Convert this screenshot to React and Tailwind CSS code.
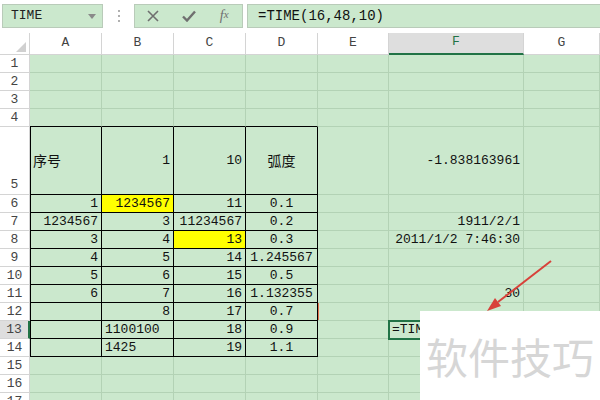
import React from "react";

// cell values by row: [text, align, highlight]
const data = {
  5: { A: ["序号", "l"], B: ["1", "r"], C: ["10", "r"], D: ["弧度", "c"], F: ["-1.838163961", "r"] },
  6: { A: ["1", "r"], B: ["1234567", "r", true], C: ["11", "r"], D: ["0.1", "c"] },
  7: { A: ["1234567", "r"], B: ["3", "r"], C: ["11234567", "r"], D: ["0.2", "c"], F: ["1911/2/1", "r"] },
  8: { A: ["3", "r"], B: ["4", "r"], C: ["13", "r", true], D: ["0.3", "c"], F: ["2011/1/2 7:46:30", "r"] },
  9: { A: ["4", "r"], B: ["5", "r"], C: ["14", "r"], D: ["1.245567", "c"] },
  10: { A: ["5", "r"], B: ["6", "r"], C: ["15", "r"], D: ["0.5", "c"] },
  11: { A: ["6", "r"], B: ["7", "r"], C: ["16", "r"], D: ["1.132355", "c"], F: ["30", "r"] },
  12: { B: ["8", "r"], C: ["17", "r"], D: ["0.7", "c"] },
  13: { B: ["1100100", "l"], C: ["18", "r"], D: ["0.9", "c"] },
  14: { B: ["1425", "l"], C: ["19", "r"], D: ["1.1", "c"] },
};

const cols = ["A", "B", "C", "D", "E", "F", "G"];
const rows = Array.from({ length: 17 }, (_, i) => i + 1);

const alignClass = {
  l: "justify-start",
  r: "justify-end",
  c: "justify-center",
};

const Cell = ({ r, col, ci }) => {
  const value = data[r]?.[col];
  const inTable = r >= 5 && r <= 14 && ci <= 3;
  const rightB = inTable ? "border-r-black" : "border-r-[#b3d2b5]";
  const bottomB = inTable || (r === 4 && ci <= 3) ? "border-b-black" : "border-b-[#b3d2b5]";
  const bg = value?.[2] ? "bg-[#ffff00]" : "bg-[#cbe8cd]";
  const leftEdge = inTable && ci === 0 ? "shadow-[inset_1px_0_0_#000]" : "";
  const redMark = r === 12 && col === "E" ? "shadow-[inset_1px_0_0_#e5734e]" : "";

  if (r === 13 && col === "F") {
    // cell being edited, its right part lies under the watermark
    return (
      <div className="relative bg-[#cbe8cd] border-r border-b border-r-[#b3d2b5] border-b-[#b3d2b5]">
        <div className="absolute -left-[1px] -top-[1px] w-[60px] h-[20px] border-2 border-[#217346] bg-[#cbe8cd] flex items-center pl-[2px] text-[13px] text-[#111]">
          <span className="w-[29px] overflow-hidden whitespace-nowrap">=TIME(16,48,10)</span>
        </div>
      </div>
    );
  }

  return (
    <div
      className={`flex items-center px-[3px] border-r border-b ${rightB} ${bottomB} ${bg} ${leftEdge} ${redMark} ${
        value ? alignClass[value[1]] : ""
      } text-[13px] text-[#111] whitespace-nowrap overflow-hidden`}
    >
      {value ? (
        <span className={/[\u4e00-\u9fff]/.test(value[0]) ? "font-['Noto_Sans_CJK_SC',sans-serif] text-[14px]" : ""}>
          {value[0]}
        </span>
      ) : null}
    </div>
  );
};

const App = () => {
  return (
    <div className="relative w-[600px] h-[400px] overflow-hidden bg-white font-['Liberation_Mono','Noto_Sans_CJK_SC',monospace]">
      {/* name box and formula bar */}
      <div className="h-[33px] flex items-start pt-[4px]">
        <div className="ml-[2px] w-[101px] h-[24px] border border-[#b9cbb9] bg-[#cbe8cd] flex items-center justify-between pl-[8px] pr-[6px] text-[13px] text-[#222]">
          <span>TIME</span>
          <svg width="8" height="5" viewBox="0 0 8 5">
            <path d="M0 0h8L4 5z" fill="#8a8a8a" />
          </svg>
        </div>
        <div className="w-[31px] h-[24px] flex flex-col items-center justify-center gap-[3px]">
          <span className="w-[2px] h-[2px] bg-[#b0b0b0]" />
          <span className="w-[2px] h-[2px] bg-[#b0b0b0]" />
          <span className="w-[2px] h-[2px] bg-[#b0b0b0]" />
        </div>
        <div className="w-[109px] h-[24px] border border-[#b9cbb9] bg-[#cbe8cd] flex items-center">
          <div className="w-[36px] flex justify-center">
            <svg width="12" height="12" viewBox="0 0 12 12">
              <path d="M1 1l10 10M11 1L1 11" stroke="#6f6f6f" strokeWidth="1.6" />
            </svg>
          </div>
          <div className="w-[36px] flex justify-center">
            <svg width="14" height="12" viewBox="0 0 14 12">
              <path d="M1 6.5l4 4L13 1.5" stroke="#6f6f6f" strokeWidth="2.4" fill="none" />
            </svg>
          </div>
          <div className="w-[36px] flex justify-center font-['Liberation_Serif',serif] italic text-[14px] text-[#6f6f6f] leading-none">
            f<span className="text-[11px]">x</span>
          </div>
        </div>
        <div className="ml-[4px] flex-1 h-[24px] border border-r-0 border-[#b9cbb9] bg-[#cbe8cd] flex items-center pl-[10px] text-[14px] text-[#111]">
          =TIME(16,48,10)
        </div>
      </div>

      {/* sheet grid */}
      <div className="grid grid-cols-[30px_72px_72px_72px_72px_71px_135px_1fr] grid-rows-[22px_18px_18px_18px_18px_68px_repeat(12,18px)]">
        <div className="border-r border-b border-[#d4d4d4] flex items-end justify-end pb-[2px] pr-[3px]">
          <svg width="10" height="10" viewBox="0 0 10 10">
            <path d="M10 0V10H0z" fill="#d0d0d0" />
          </svg>
        </div>
        {cols.map((c) => (
          <div
            key={c}
            className={`flex items-end justify-center pb-[2px] text-[13px] ${
              c === "F"
                ? "bg-[#dedede] text-[#217346] border-b-2 border-b-[#217346] border-r border-r-[#d4d4d4]"
                : "text-[#444] border-r border-b border-[#d4d4d4]"
            }`}
          >
            {c}
          </div>
        ))}
        {rows.map((r) => (
          <React.Fragment key={r}>
            <div
              className={`flex justify-center text-[13px] text-[#444] ${r === 5 ? "items-end" : "items-center"} ${
                r === 13
                  ? "bg-[#dedede] border-r-2 border-r-[#217346] border-b border-b-[#d4d4d4]"
                  : "border-r border-b border-[#d4d4d4]"
              }`}
            >
              {r}
            </div>
            {cols.map((c, ci) => (
              <Cell key={c} r={r} col={c} ci={ci} />
            ))}
          </React.Fragment>
        ))}
      </div>

      {/* annotation arrow */}
      <svg className="absolute left-0 top-0" width="600" height="400" viewBox="0 0 600 400">
        <path d="M551 261L498 302" stroke="#d8413a" strokeWidth="2" />
        <path d="M487 311L501 306L495 298z" fill="#d8413a" />
      </svg>

      {/* watermark */}
      <div className="absolute left-[420px] top-[311px] w-[180px] h-[89px] bg-white flex items-center pl-[6px] font-['Noto_Sans_CJK_SC',sans-serif] text-[42px] leading-none text-[#d6d6d6]">
        软件技巧
      </div>
    </div>
  );
};

export default App;
